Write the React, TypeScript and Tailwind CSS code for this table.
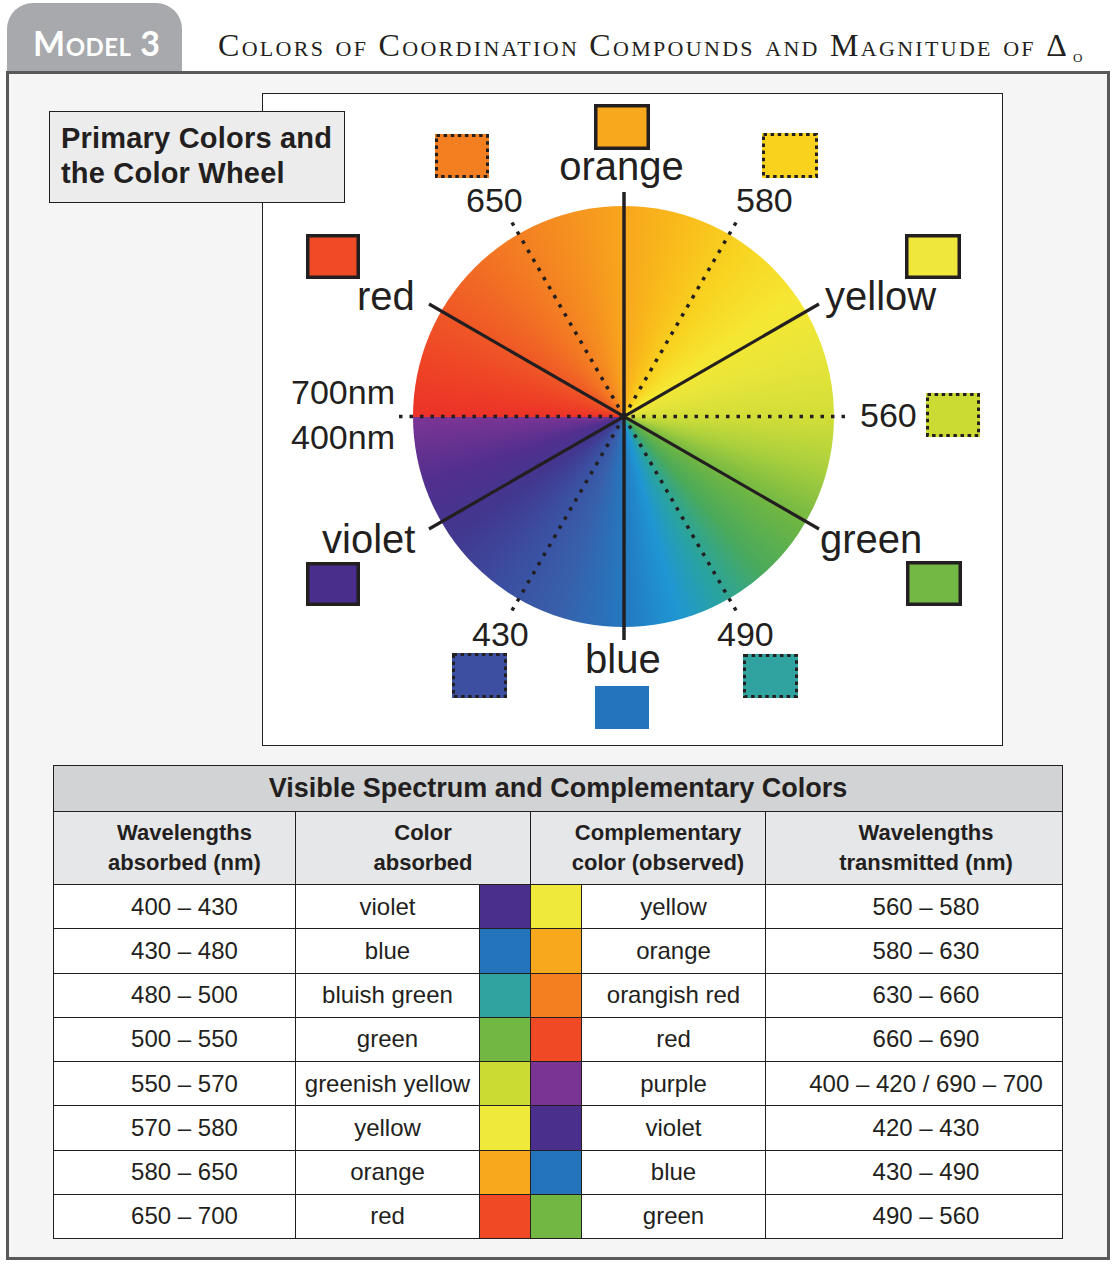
import React from "react";

const INK = "#231f20";

type Swatch = { x: number; y: number; w: number; h: number; fill: string; kind: "solid" | "dotted" | "plain" };

// positions are inside the white wheel panel
const swatches: Swatch[] = [
  { x: 172, y: 40, w: 54, h: 44, fill: "#f47f20", kind: "dotted" },
  { x: 331, y: 10, w: 56, h: 46, fill: "#f8a81c", kind: "solid" },
  { x: 499, y: 39, w: 56, h: 45, fill: "#f8d21c", kind: "dotted" },
  { x: 43, y: 140, w: 54, h: 45, fill: "#ef4b26", kind: "solid" },
  { x: 642, y: 140, w: 56, h: 45, fill: "#efe73c", kind: "solid" },
  { x: 663, y: 299, w: 54, h: 44, fill: "#cbdb33", kind: "dotted" },
  { x: 43, y: 468, w: 54, h: 44, fill: "#4a2e8b", kind: "solid" },
  { x: 643, y: 467, w: 56, h: 45, fill: "#73b844", kind: "solid" },
  { x: 189, y: 559, w: 55, h: 45, fill: "#3d4fa0", kind: "dotted" },
  { x: 332, y: 592, w: 54, h: 43, fill: "#2474bb", kind: "plain" },
  { x: 480, y: 560, w: 55, h: 44, fill: "#30a3a0", kind: "dotted" },
];

type Label = { t: string; x: number; y: number; size: number; anchor?: "start" | "middle" };

const labels: Label[] = [
  { t: "orange", x: 358.5, y: 86, size: 40, anchor: "middle" },
  { t: "650", x: 203, y: 118, size: 34 },
  { t: "580", x: 473, y: 118, size: 34 },
  { t: "red", x: 94, y: 216, size: 40 },
  { t: "yellow", x: 562, y: 216, size: 40 },
  { t: "700nm", x: 28, y: 310, size: 34 },
  { t: "400nm", x: 28, y: 355, size: 34 },
  { t: "560", x: 597, y: 333, size: 34 },
  { t: "violet", x: 59, y: 459, size: 40 },
  { t: "green", x: 557, y: 459, size: 40 },
  { t: "430", x: 209, y: 552, size: 34 },
  { t: "490", x: 454, y: 552, size: 34 },
  { t: "blue", x: 322, y: 579, size: 40 },
];

const CX = 361;
const CY = 322.5;

// dotted half-lines, drawn from the outer end toward the centre
const dotted = [
  [136, CY],
  [582, CY],
  [CX - 112, CY - 194],
  [CX + 112, CY - 194],
  [CX - 112, CY + 194],
  [CX + 112, CY + 194],
];

const rows = [
  ["400 – 430", "violet", "#4b2f8d", "#eee93b", "yellow", "560 – 580"],
  ["430 – 480", "blue", "#2474bb", "#f8a81c", "orange", "580 – 630"],
  ["480 – 500", "bluish green", "#30a3a0", "#f47f20", "orangish red", "630 – 660"],
  ["500 – 550", "green", "#72b744", "#ef4a25", "red", "660 – 690"],
  ["550 – 570", "greenish yellow", "#cbdb33", "#7a3594", "purple", "400 – 420 / 690 – 700"],
  ["570 – 580", "yellow", "#eee93b", "#4b2f8d", "violet", "420 – 430"],
  ["580 – 650", "orange", "#f8a81c", "#2474bb", "blue", "430 – 490"],
  ["650 – 700", "red", "#ef4a25", "#72b744", "green", "490 – 560"],
];

function WheelDrawing() {
  return (
    <svg width={739} height={651} viewBox="0 0 739 651" className="col-start-1 row-start-1 font-['Liberation_Sans',Arial,sans-serif]">
      {dotted.map(([x, y], i) => (
        <line key={i} x1={x} y1={y} x2={CX} y2={CY} stroke={INK} strokeWidth={3.5} strokeDasharray="3.5 7" />
      ))}
      <line x1={CX} y1={98} x2={CX} y2={546} stroke={INK} strokeWidth={3.5} />
      <line x1={166} y1={210} x2={556} y2={435} stroke={INK} strokeWidth={3.2} />
      <line x1={166} y1={435} x2={556} y2={210} stroke={INK} strokeWidth={3.2} />

      {swatches.map((s, i) => (
        <g key={i}>
          {s.kind === "plain" ? (
            <rect x={s.x} y={s.y} width={s.w} height={s.h} fill={s.fill} />
          ) : s.kind === "solid" ? (
            <rect x={s.x + 1.75} y={s.y + 1.75} width={s.w - 3.5} height={s.h - 3.5} fill={s.fill} stroke={INK} strokeWidth={3.5} />
          ) : (
            <>
              <rect x={s.x} y={s.y} width={s.w} height={s.h} fill={s.fill} />
              <rect x={s.x + 1.5} y={s.y + 1.5} width={s.w - 3} height={s.h - 3} fill="none" stroke={INK} strokeWidth={3} strokeDasharray="3.5 3.6" />
            </>
          )}
        </g>
      ))}

      {labels.map((l) => (
        <text key={l.t} x={l.x} y={l.y} fontSize={l.size} fill={INK} textAnchor={l.anchor || "start"}>
          {l.t}
        </text>
      ))}
    </svg>
  );
}

export default function App() {
  return (
    <div className="h-[1268px] w-[1113px] bg-white font-['Liberation_Sans',Arial,sans-serif] text-[#231f20]">
      {/* header */}
      <div className="flex h-[71px] items-baseline">
        <div className="ml-[7px] mt-[3px] h-[68px] w-[175px] rounded-t-[26px] bg-[#a7a9ac] pl-[26px] pt-[23px] font-['Lato',sans-serif] text-[34px] font-bold leading-[34px] tracking-[0.5px] text-white [font-variant:small-caps]">
          Model 3
        </div>
        <div className="ml-[36px] whitespace-nowrap font-['Liberation_Serif',serif] text-[32px] leading-[32px] tracking-[2.3px] [font-variant:small-caps]">
          Colors of Coordination Compounds and Magnitude of Δ
          <span className="relative top-[6px] ml-[4px] text-[19px]">o</span>
        </div>
      </div>

      {/* framed model */}
      <div className="ml-[6px] h-[1189px] w-[1104px] border-[3px] border-[#58595b] bg-[#f5f5f5]">
        <div className="relative pt-[19px]">
          <div className="ml-[253px] grid h-[653px] w-[741px] border border-[#231f20] bg-white">
            <div className="col-start-1 row-start-1 ml-[150px] mt-[112px] h-[421px] w-[421px] rounded-full bg-[conic-gradient(from_0deg,#f8a61d_0deg,#f9bd1b_18deg,#f8d421_35deg,#f5e733_55deg,#e8e53a_72deg,#d3de38_90deg,#a9cf3d_105deg,#6db544_122deg,#4aaa5b_138deg,#2aa39e_152deg,#1f96d3_165deg,#2478c0_180deg,#3860ab_198deg,#3b4fa1_215deg,#42378f_235deg,#522f8e_252deg,#7b3594_270deg,#ec3227_270deg,#ee4426_285deg,#ef5726_300deg,#f37a23_325deg,#f59220_345deg,#f8a61d_360deg)]" />
            <WheelDrawing />
          </div>
          <div className="absolute left-[40px] top-[37px] h-[92px] w-[296px] border border-[#231f20] bg-[#ececec] pl-[11px] pt-[9px] text-[29px] font-bold leading-[35px] tracking-[0.2px]">
            Primary Colors and
            <br />
            the Color Wheel
          </div>
        </div>

        <table className="ml-[44px] mt-[19px] w-[1009px] table-fixed border-collapse bg-white text-center">
          <colgroup>
            <col className="w-[242px]" />
            <col className="w-[184px]" />
            <col className="w-[51px]" />
            <col className="w-[51px]" />
            <col className="w-[184px]" />
            <col className="w-[297px]" />
          </colgroup>
          <thead>
            <tr className="h-[46px] bg-[#d1d3d4]">
              <th colSpan={6} className="border border-[#231f20] text-[27px] font-bold">
                Visible Spectrum and Complementary Colors
              </th>
            </tr>
            <tr className="h-[73px] bg-[#e6e7e8] text-[22px] font-bold leading-[30px]">
              <th className="border border-[#231f20] pl-[20px]">
                Wavelengths
                <br />
                absorbed (nm)
              </th>
              <th colSpan={2} className="border border-[#231f20] pl-[20px]">
                Color
                <br />
                absorbed
              </th>
              <th colSpan={2} className="border border-[#231f20] pl-[20px]">
                Complementary
                <br />
                color (observed)
              </th>
              <th className="border border-[#231f20] pl-[24px]">
                Wavelengths
                <br />
                transmitted (nm)
              </th>
            </tr>
          </thead>
          <tbody className="text-[24px]">
            {rows.map((r) => (
              <tr key={r[0]} className="h-[44.25px]">
                <td className="border border-[#231f20] pl-[20px]">{r[0]}</td>
                <td className="border border-[#231f20]">{r[1]}</td>
                <td className="border border-[#231f20]" style={{ backgroundColor: r[2] }} />
                <td className="border border-[#231f20]" style={{ backgroundColor: r[3] }} />
                <td className="border border-[#231f20]">{r[4]}</td>
                <td className="border border-[#231f20] pl-[24px]">{r[5]}</td>
              </tr>
            ))}
          </tbody>
        </table>
      </div>
    </div>
  );
}
